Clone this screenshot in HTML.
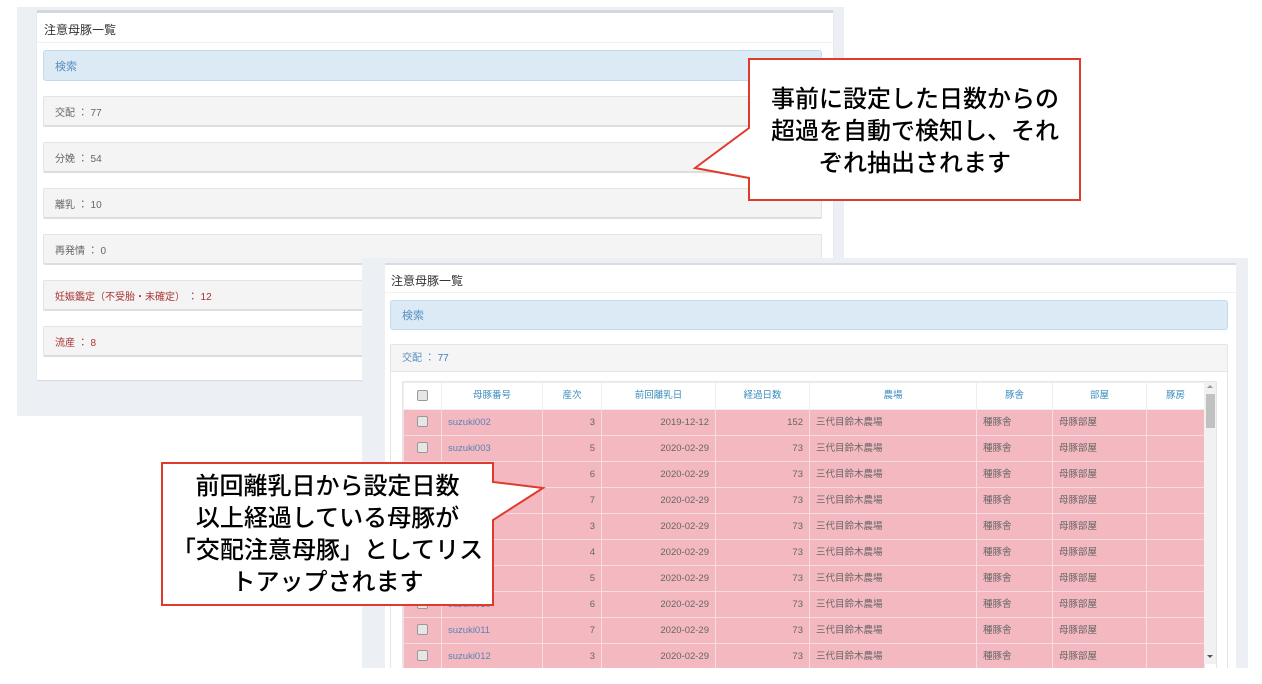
<!DOCTYPE html>
<html><head><meta charset="utf-8"><style>
*{box-sizing:border-box;margin:0;padding:0}
body{width:1262px;height:684px;background:#fff;position:relative;overflow:hidden;font-family:"Liberation Sans","Noto Sans CJK JP",sans-serif;color:#555}
.abs{position:absolute}
.bg1{left:17px;top:7px;width:827px;height:409px;background:#eceff4}
.p1{left:37px;top:10px;width:796px;height:370px;background:#fff;border-top:3px solid #d2d6de;box-shadow:0 1px 1px rgba(0,0,0,.1)}
.title{font-size:12px;color:#333}
.hr{height:1px;background:#eef0f2}
.srch{background:#dceaf5;border:1px solid #c1dbea;border-radius:3px;font-size:11px;color:#5a8fbf;padding-left:11px;display:flex;align-items:center}
.row{background:#f4f4f4;border:1px solid #e4e4e4;border-bottom:2px solid #ddd;border-radius:2px;font-size:10px;color:#666;padding-left:11px;display:flex;align-items:center}
.red{color:#a33}
.bg2{left:362px;top:258px;width:886px;height:410px;background:#eceff4;overflow:hidden}
.p2{left:23px;top:5px;width:851px;height:420px;background:#fff;border-top:2px solid #d8dce2}
table{border-collapse:collapse;font-size:9.5px;table-layout:fixed}
td,th{border:1px solid #f7dde1;height:26px;padding:0 6px;white-space:nowrap;vertical-align:middle;line-height:12px}
th{color:#3c8dbc;font-weight:normal;border-color:#eee;background:#fff;height:27px}
tr.r td{background:#f3b8c0;color:#666}
tr.r td.l{color:#5e82b4}
.cb{display:inline-block;width:11px;height:11px;border:1px solid #999;border-radius:2px;background:#e6e6e6;vertical-align:middle}
.call{font-size:24px;color:#000;text-align:center;line-height:32px;font-weight:500}
</style></head><body>
<div class="abs bg1"></div>
<div class="abs p1">
 <div class="abs title" style="left:7px;top:8px">注意母豚一覧</div>
 <div class="abs hr" style="left:0;top:29px;width:796px"></div>
 <div class="abs srch" style="left:6px;top:37px;width:779px;height:31px">検索</div>
 <div class="abs row" style="left:6px;top:83px;width:779px;height:31px">交配 ： 77</div>
 <div class="abs row" style="left:6px;top:129px;width:779px;height:31px">分娩 ： 54</div>
 <div class="abs row" style="left:6px;top:175px;width:779px;height:31px">離乳 ： 10</div>
 <div class="abs row" style="left:6px;top:221px;width:779px;height:31px">再発情 ： 0</div>
 <div class="abs row red" style="left:6px;top:267px;width:779px;height:31px">妊娠鑑定（不受胎・未確定） ： 12</div>
 <div class="abs row red" style="left:6px;top:313px;width:779px;height:31px">流産 ： 8</div>
</div>
<div class="abs bg2">
<div class="abs p2">
 <div class="abs title" style="left:6px;top:7px">注意母豚一覧</div>
 <div class="abs hr" style="left:0;top:27px;width:851px"></div>
 <div class="abs srch" style="left:5px;top:35px;width:838px;height:30px">検索</div>
 <div class="abs" style="left:5px;top:79px;width:838px;height:345px;border:1px solid #e4e4e4;border-radius:2px">
  <div style="height:27px;background:#f5f5f5;border-bottom:1px solid #e4e4e4;font-size:10px;color:#5a8fbf;padding-left:11px;line-height:27px">交配 ： <b style="font-weight:normal;color:#3c7dba">77</b></div>
 </div>
 <div class="abs" style="left:17px;top:116px;width:815px;height:290px;overflow:hidden;border:1px solid #e6e6e6;border-bottom:0">
 <table style="width:801px">
  <colgroup><col style="width:38px"><col style="width:101px"><col style="width:59px"><col style="width:114px"><col style="width:94px"><col style="width:167px"><col style="width:76px"><col style="width:94px"><col style="width:58px"></colgroup>
  <tr><th><span class="cb"></span></th><th>母豚番号</th><th>産次</th><th>前回離乳日</th><th>経過日数</th><th>農場</th><th>豚舎</th><th>部屋</th><th>豚房</th></tr>
  <tr class="r"><td style="text-align:center"><span class="cb"></span></td><td class="l">suzuki002</td><td align="right">3</td><td align="right">2019-12-12</td><td align="right">152</td><td>三代目鈴木農場</td><td>種豚舎</td><td>母豚部屋</td><td></td></tr>
  <tr class="r"><td style="text-align:center"><span class="cb"></span></td><td class="l">suzuki003</td><td align="right">5</td><td align="right">2020-02-29</td><td align="right">73</td><td>三代目鈴木農場</td><td>種豚舎</td><td>母豚部屋</td><td></td></tr>
  <tr class="r"><td style="text-align:center"><span class="cb"></span></td><td class="l">suzuki004</td><td align="right">6</td><td align="right">2020-02-29</td><td align="right">73</td><td>三代目鈴木農場</td><td>種豚舎</td><td>母豚部屋</td><td></td></tr>
  <tr class="r"><td style="text-align:center"><span class="cb"></span></td><td class="l">suzuki005</td><td align="right">7</td><td align="right">2020-02-29</td><td align="right">73</td><td>三代目鈴木農場</td><td>種豚舎</td><td>母豚部屋</td><td></td></tr>
  <tr class="r"><td style="text-align:center"><span class="cb"></span></td><td class="l">suzuki006</td><td align="right">3</td><td align="right">2020-02-29</td><td align="right">73</td><td>三代目鈴木農場</td><td>種豚舎</td><td>母豚部屋</td><td></td></tr>
  <tr class="r"><td style="text-align:center"><span class="cb"></span></td><td class="l">suzuki007</td><td align="right">4</td><td align="right">2020-02-29</td><td align="right">73</td><td>三代目鈴木農場</td><td>種豚舎</td><td>母豚部屋</td><td></td></tr>
  <tr class="r"><td style="text-align:center"><span class="cb"></span></td><td class="l">suzuki008</td><td align="right">5</td><td align="right">2020-02-29</td><td align="right">73</td><td>三代目鈴木農場</td><td>種豚舎</td><td>母豚部屋</td><td></td></tr>
  <tr class="r"><td style="text-align:center"><span class="cb"></span></td><td class="l">suzuki010</td><td align="right">6</td><td align="right">2020-02-29</td><td align="right">73</td><td>三代目鈴木農場</td><td>種豚舎</td><td>母豚部屋</td><td></td></tr>
  <tr class="r"><td style="text-align:center"><span class="cb"></span></td><td class="l">suzuki011</td><td align="right">7</td><td align="right">2020-02-29</td><td align="right">73</td><td>三代目鈴木農場</td><td>種豚舎</td><td>母豚部屋</td><td></td></tr>
  <tr class="r"><td style="text-align:center"><span class="cb"></span></td><td class="l">suzuki012</td><td align="right">3</td><td align="right">2020-02-29</td><td align="right">73</td><td>三代目鈴木農場</td><td>種豚舎</td><td>母豚部屋</td><td></td></tr>
 </table>
 <div class="abs" style="left:801px;top:0;width:13px;height:282px;background:#f1f1f1">
  <div class="abs" style="left:2px;top:12px;width:9px;height:34px;background:#c1c1c1"></div>
  <div class="abs" style="left:3px;top:3px;width:0;height:0;border:3px solid transparent;border-bottom-color:#999;border-top:0"></div>
  <div class="abs" style="left:3px;top:273px;width:0;height:0;border:3px solid transparent;border-top-color:#555;border-bottom:0"></div>
 </div>
 </div>
</div>
</div>
<svg class="abs" style="left:0;top:0" width="1262" height="684">
 <path d="M749,59 H1080 V200 H749 V178 L695,168 L749,128 Z" fill="#fff" stroke="#e03a2e" stroke-width="2"/>
 <path d="M162,463 H493 V482 L543,488 L493,520 V605 H162 Z" fill="#fff" stroke="#e03a2e" stroke-width="2"/>
</svg>
<div class="abs call" style="left:750px;top:84px;width:330px">事前に設定した日数からの<br>超過を自動で検知し、それ<br>ぞれ抽出されます</div>
<div class="abs call" style="left:162px;top:471px;width:331px">前回離乳日から設定日数<br>以上経過している母豚が<br>「交配注意母豚」としてリス<br>トアップされます</div>
</body></html>
